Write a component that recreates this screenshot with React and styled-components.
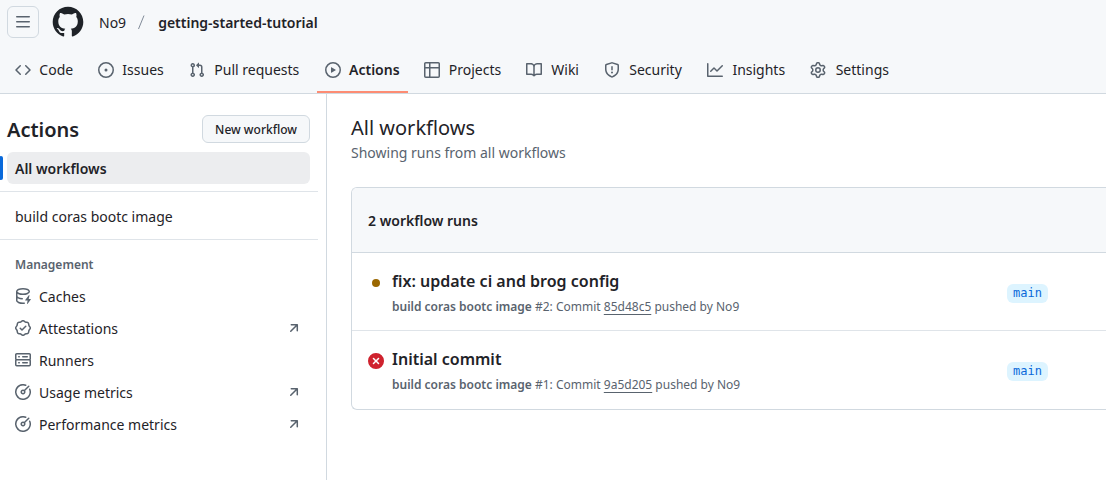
import React from "react";
import styled, { createGlobalStyle, css } from "styled-components";

const color = {
  text: "#1f2328",
  muted: "#59636e",
  border: "#d1d9e0",
  softBorder: "#dfe4e9",
  subtle: "#f6f8fa",
  accent: "#0969da",
  accentBg: "#ddf4ff",
  orange: "#fd8c73",
  amber: "#9a6700",
  red: "#cf222e",
};

const GlobalStyle = createGlobalStyle`
  *, *::before, *::after { box-sizing: border-box; }
  body {
    margin: 0;
    background: #ffffff;
    color: ${color.text};
    font-family: "Noto Sans", "Liberation Sans", sans-serif;
    font-size: 14px;
    line-height: 21px;
    overflow-x: hidden;
  }
  h1, h2, h3, p, ul, ol { margin: 0; padding: 0; }
  ul, ol { list-style: none; }
  a { color: inherit; text-decoration: none; }
  button { font: inherit; color: inherit; cursor: pointer; }
`;

const paths = {
  menu: "M1 2.75A.75.75 0 0 1 1.75 2h12.5a.75.75 0 0 1 0 1.5H1.75A.75.75 0 0 1 1 2.75Zm0 5A.75.75 0 0 1 1.75 7h12.5a.75.75 0 0 1 0 1.5H1.75A.75.75 0 0 1 1 7.75ZM1.75 12h12.5a.75.75 0 0 1 0 1.5H1.75a.75.75 0 0 1 0-1.5Z",
  code: "m11.28 3.22 4.25 4.25a.75.75 0 0 1 0 1.06l-4.25 4.25a.749.749 0 0 1-1.275-.326.749.749 0 0 1 .215-.734L13.94 8l-3.72-3.72a.749.749 0 0 1 .326-1.275.749.749 0 0 1 .734.215Zm-6.56 0a.751.751 0 0 1 1.042.018.751.751 0 0 1 .018 1.042L2.06 8l3.72 3.72a.749.749 0 0 1-.326 1.275.749.749 0 0 1-.734-.215L.47 8.53a.75.75 0 0 1 0-1.06Z",
  issue: "M8 9.5a1.5 1.5 0 1 0 0-3 1.5 1.5 0 0 0 0 3Z M8 0a8 8 0 1 1 0 16A8 8 0 0 1 8 0ZM1.5 8a6.5 6.5 0 1 0 13 0 6.5 6.5 0 0 0-13 0Z",
  pull: "M1.5 3.25a2.25 2.25 0 1 1 3 2.122v5.256a2.251 2.251 0 1 1-1.5 0V5.372A2.25 2.25 0 0 1 1.5 3.25Zm5.677-.177L9.573.677A.25.25 0 0 1 10 .854V2.5h1A2.5 2.5 0 0 1 13.5 5v5.628a2.251 2.251 0 1 1-1.5 0V5a1 1 0 0 0-1-1h-1v1.646a.25.25 0 0 1-.427.177L7.177 3.427a.25.25 0 0 1 0-.354ZM3.75 2.5a.75.75 0 1 0 0 1.5.75.75 0 0 0 0-1.5Zm0 9.5a.75.75 0 1 0 0 1.5.75.75 0 0 0 0-1.5Zm8.25.75a.75.75 0 1 0 1.5 0 .75.75 0 0 0-1.5 0Z",
  play: "M8 0a8 8 0 1 1 0 16A8 8 0 0 1 8 0ZM1.5 8a6.5 6.5 0 1 0 13 0 6.5 6.5 0 0 0-13 0Zm4.879-2.773 4.264 2.559a.25.25 0 0 1 0 .428l-4.264 2.559A.25.25 0 0 1 6 10.559V5.442a.25.25 0 0 1 .379-.215Z",
  table: "M0 1.75C0 .784.784 0 1.75 0h12.5C15.216 0 16 .784 16 1.75v12.5A1.75 1.75 0 0 1 14.25 16H1.75A1.75 1.75 0 0 1 0 14.25ZM6.5 6.5v8h7.75a.25.25 0 0 0 .25-.25V6.5Zm8-1.5V1.75a.25.25 0 0 0-.25-.25H6.5V5Zm-13 1.5v7.75c0 .138.112.25.25.25H5v-8ZM5 5V1.5H1.75a.25.25 0 0 0-.25.25V5Z",
  book: "M0 1.75A.75.75 0 0 1 .75 1h4.253c1.227 0 2.317.59 3 1.501A3.743 3.743 0 0 1 11.006 1h4.245a.75.75 0 0 1 .75.75v10.5a.75.75 0 0 1-.75.75h-4.507a2.25 2.25 0 0 0-1.591.659l-.622.621a.75.75 0 0 1-1.06 0l-.622-.621A2.25 2.25 0 0 0 5.258 13H.75a.75.75 0 0 1-.75-.75Zm7.251 10.324.004-5.073-.002-2.253A2.25 2.25 0 0 0 5.003 2.5H1.5v9h3.757a3.75 3.75 0 0 1 1.994.574ZM8.755 4.75l-.004 7.322a3.752 3.752 0 0 1 1.992-.572H14.5v-9h-3.495a2.25 2.25 0 0 0-2.25 2.25Z",
  shield: "M7.467.133a1.748 1.748 0 0 1 1.066 0l5.25 1.68A1.75 1.75 0 0 1 15 3.48V7c0 1.566-.32 3.182-1.303 4.682-.983 1.498-2.585 2.813-5.032 3.855a1.697 1.697 0 0 1-1.33 0c-2.447-1.042-4.049-2.357-5.032-3.855C1.32 10.182 1 8.566 1 7V3.48a1.75 1.75 0 0 1 1.217-1.667Zm.61 1.429a.25.25 0 0 0-.153 0l-5.25 1.68a.25.25 0 0 0-.174.238V7c0 1.358.275 2.666 1.057 3.86.784 1.194 2.121 2.34 4.366 3.297a.196.196 0 0 0 .154 0c2.245-.956 3.582-2.104 4.366-3.298C13.225 9.666 13.5 8.36 13.5 7V3.48a.251.251 0 0 0-.174-.237l-5.25-1.68ZM8.75 4.75v3a.75.75 0 0 1-1.5 0v-3a.75.75 0 0 1 1.5 0ZM9 10.5a1 1 0 1 1-2 0 1 1 0 0 1 2 0Z",
  graph: "M1.5 1.75V13.5h13.75a.75.75 0 0 1 0 1.5H.75a.75.75 0 0 1-.75-.75V1.75a.75.75 0 0 1 1.5 0Zm14.28 2.53-5.25 5.25a.75.75 0 0 1-1.06 0L7 7.06 4.28 9.78a.751.751 0 0 1-1.042-.018.751.751 0 0 1-.018-1.042l3.25-3.25a.75.75 0 0 1 1.06 0L10 7.94l4.72-4.72a.751.751 0 0 1 1.042.018.751.751 0 0 1 .018 1.042Z",
  gear: "M8 0a8.2 8.2 0 0 1 .701.031C9.444.095 9.99.645 10.16 1.29l.288 1.107c.018.066.079.158.212.224.231.114.454.243.668.386.123.082.233.09.299.071l1.103-.303c.644-.176 1.392.021 1.82.63.27.385.506.792.704 1.218.315.675.111 1.422-.364 1.891l-.814.806c-.049.048-.098.147-.088.294.016.257.016.515 0 .772-.01.147.038.246.088.294l.814.806c.475.469.679 1.216.364 1.891a7.977 7.977 0 0 1-.704 1.217c-.428.61-1.176.807-1.82.63l-1.102-.302c-.067-.019-.177-.011-.3.071a5.909 5.909 0 0 1-.668.386c-.133.066-.194.158-.211.224l-.29 1.106c-.168.646-.715 1.196-1.458 1.26a8.006 8.006 0 0 1-1.402 0c-.743-.064-1.289-.614-1.458-1.26l-.289-1.106c-.018-.066-.079-.158-.212-.224a5.738 5.738 0 0 1-.668-.386c-.123-.082-.233-.09-.299-.071l-1.103.303c-.644.176-1.392-.021-1.82-.63a8.12 8.12 0 0 1-.704-1.218c-.315-.675-.111-1.422.363-1.891l.815-.806c.05-.048.098-.147.088-.294a6.214 6.214 0 0 1 0-.772c.01-.147-.038-.246-.088-.294l-.815-.806C.635 6.045.431 5.298.746 4.623a7.92 7.92 0 0 1 .704-1.217c.428-.61 1.176-.807 1.82-.63l1.102.302c.067.019.177.011.3-.071.214-.143.437-.272.668-.386.133-.066.194-.158.211-.224l.29-1.106C6.009.645 6.556.095 7.299.03 7.53.01 7.764 0 8 0Zm-.571 1.525c-.036.003-.108.036-.137.146l-.289 1.105c-.147.561-.549.967-.998 1.189-.173.086-.34.183-.5.29-.417.278-.97.423-1.529.27l-1.103-.303c-.109-.03-.175.016-.195.045-.22.312-.412.644-.573.99-.014.031-.021.11.059.19l.815.806c.411.406.562.957.53 1.456a4.709 4.709 0 0 0 0 .582c.032.499-.119 1.05-.53 1.456l-.815.806c-.081.08-.073.159-.059.19.162.346.353.677.573.989.02.03.085.076.195.046l1.102-.303c.56-.153 1.113-.008 1.53.27.161.107.328.204.501.29.447.222.85.629.997 1.189l.289 1.105c.029.109.101.143.137.146a6.6 6.6 0 0 0 1.142 0c.036-.003.108-.036.137-.146l.289-1.105c.147-.561.549-.967.998-1.189.173-.086.34-.183.5-.29.417-.278.97-.423 1.529-.27l1.103.303c.109.029.175-.016.195-.045.22-.313.411-.644.573-.99.014-.031.021-.11-.059-.19l-.815-.806c-.411-.406-.562-.957-.53-1.456a4.709 4.709 0 0 0 0-.582c-.032-.499.119-1.05.53-1.456l.815-.806c.081-.08.073-.159.059-.19a6.464 6.464 0 0 0-.573-.989c-.02-.03-.085-.076-.195-.046l-1.102.303c-.56.153-1.113.008-1.53-.27a4.44 4.44 0 0 0-.501-.29c-.447-.222-.85-.629-.997-1.189l-.289-1.105c-.029-.11-.101-.143-.137-.146a6.6 6.6 0 0 0-1.142 0ZM11 8a3 3 0 1 1-6 0 3 3 0 0 1 6 0ZM9.5 8a1.5 1.5 0 1 0-3.001.001A1.5 1.5 0 0 0 9.5 8Z",
  cache: "M2.5 5.724V8c0 .248.238.7 1.169 1.159.874.43 2.144.745 3.62.822a.75.75 0 1 1-.078 1.498c-1.622-.085-3.102-.432-4.204-.975a5.565 5.565 0 0 1-.507-.28V12.5c0 .133.058.318.282.551.227.237.591.483 1.101.707 1.015.447 2.47.742 4.117.742.406 0 .802-.018 1.183-.052a.751.751 0 1 1 .134 1.494C8.89 15.98 8.45 16 8 16c-1.805 0-3.475-.32-4.721-.869-.623-.274-1.173-.619-1.579-1.041-.408-.425-.7-.964-.7-1.59v-9c0-.626.292-1.165.7-1.591.406-.42.956-.766 1.579-1.04C4.525.32 6.195 0 8 0c1.806 0 3.476.32 4.721.869.623.274 1.173.619 1.579 1.041.408.425.7.964.7 1.59 0 .626-.292 1.165-.7 1.591-.406.42-.956.766-1.578 1.04C11.475 6.68 9.805 7 8 7c-1.805 0-3.475-.32-4.721-.869a6.15 6.15 0 0 1-.779-.407Zm0-2.224c0 .133.058.318.282.551.227.237.591.483 1.101.707C4.898 5.205 6.353 5.5 8 5.5c1.646 0 3.101-.295 4.118-.742.508-.224.873-.471 1.1-.708.224-.232.282-.417.282-.55 0-.133-.058-.318-.282-.551-.227-.237-.591-.483-1.101-.707C11.102 1.795 9.647 1.5 8 1.5c-1.646 0-3.101.295-4.118.742-.508.224-.873.471-1.1.708-.224.232-.282.417-.282.55Z M14.49 7.582a.375.375 0 0 0-.66-.313l-3.625 4.625a.375.375 0 0 0 .295.606h2.127l-.619 2.922a.375.375 0 0 0 .666.304l3.125-4.125A.375.375 0 0 0 15.5 11h-1.778l.769-3.418Z",
  verified: "m9.585.52.929.68c.153.112.331.186.518.215l1.138.175a2.678 2.678 0 0 1 2.24 2.24l.174 1.139c.029.187.103.365.215.518l.68.928a2.677 2.677 0 0 1 0 3.17l-.68.928a1.174 1.174 0 0 0-.215.518l-.175 1.138a2.678 2.678 0 0 1-2.241 2.241l-1.138.175a1.17 1.17 0 0 0-.518.215l-.928.68a2.677 2.677 0 0 1-3.17 0l-.928-.68a1.174 1.174 0 0 0-.518-.215L3.83 14.41a2.678 2.678 0 0 1-2.24-2.24l-.175-1.138a1.17 1.17 0 0 0-.215-.518l-.68-.928a2.677 2.677 0 0 1 0-3.17l.68-.928c.112-.153.186-.331.215-.518l.175-1.14a2.678 2.678 0 0 1 2.24-2.24l1.139-.175c.187-.029.365-.103.518-.215l.928-.68a2.677 2.677 0 0 1 3.17 0ZM7.303 1.728l-.927.68a2.67 2.67 0 0 1-1.18.489l-1.137.174a1.179 1.179 0 0 0-.987.987l-.174 1.136a2.677 2.677 0 0 1-.489 1.18l-.68.928a1.18 1.18 0 0 0 0 1.394l.68.927c.256.348.424.753.489 1.18l.174 1.137c.078.509.478.909.987.987l1.136.174a2.67 2.67 0 0 1 1.18.489l.928.68c.414.305.979.305 1.394 0l.927-.68a2.67 2.67 0 0 1 1.18-.489l1.137-.174a1.18 1.18 0 0 0 .987-.987l.174-1.136a2.67 2.67 0 0 1 .489-1.18l.68-.928a1.176 1.176 0 0 0 0-1.394l-.68-.927a2.686 2.686 0 0 1-.489-1.18l-.174-1.137a1.179 1.179 0 0 0-.987-.987l-1.136-.174a2.677 2.677 0 0 1-1.18-.489l-.928-.68a1.176 1.176 0 0 0-1.394 0ZM11.28 6.78l-3.75 3.75a.75.75 0 0 1-1.06 0L4.72 8.78a.751.751 0 0 1 .018-1.042.751.751 0 0 1 1.042-.018L7 8.94l3.22-3.22a.751.751 0 0 1 1.042.018.751.751 0 0 1 .018 1.042Z",
  server: "M1.75 1h12.5c.966 0 1.75.784 1.75 1.75v4c0 .372-.116.717-.314 1 .198.283.314.628.314 1v4a1.75 1.75 0 0 1-1.75 1.75H1.75A1.75 1.75 0 0 1 0 12.75v-4c0-.358.109-.707.314-1a1.739 1.739 0 0 1-.314-1v-4C0 1.784.784 1 1.75 1ZM1.5 2.75v4c0 .138.112.25.25.25h12.5a.25.25 0 0 0 .25-.25v-4a.25.25 0 0 0-.25-.25H1.75a.25.25 0 0 0-.25.25Zm.25 5.75a.25.25 0 0 0-.25.25v4c0 .138.112.25.25.25h12.5a.25.25 0 0 0 .25-.25v-4a.25.25 0 0 0-.25-.25ZM7 4.75A.75.75 0 0 1 7.75 4h4.5a.75.75 0 0 1 0 1.5h-4.5A.75.75 0 0 1 7 4.75ZM7.75 10h4.5a.75.75 0 0 1 0 1.5h-4.5a.75.75 0 0 1 0-1.5ZM3 4.75A.75.75 0 0 1 3.75 4h.5a.75.75 0 0 1 0 1.5h-.5A.75.75 0 0 1 3 4.75ZM3.75 10h.5a.75.75 0 0 1 0 1.5h-.5a.75.75 0 0 1 0-1.5Z",
  meter: "M8 1.5a6.5 6.5 0 1 0 6.016 4.035.75.75 0 0 1 1.388-.57 8 8 0 1 1-4.37-4.37.75.75 0 0 1-.569 1.389A6.473 6.473 0 0 0 8 1.5Zm6.28.22a.75.75 0 0 1 0 1.06l-4.063 4.064a2.5 2.5 0 1 1-1.06-1.06L13.22 1.72a.75.75 0 0 1 1.06 0ZM7 8a1 1 0 1 0 2 0 1 1 0 0 0-2 0Z",
  arrow: "M4.53 4.75A.75.75 0 0 1 5.28 4h6.01a.75.75 0 0 1 .75.75v6.01a.75.75 0 0 1-1.5 0v-4.2l-5.26 5.261a.749.749 0 0 1-1.275-.326.749.749 0 0 1 .215-.734L9.48 5.5h-4.2a.75.75 0 0 1-.75-.75Z",
  dot: "M8 4a4 4 0 1 1 0 8 4 4 0 0 1 0-8Z",
  failed: "M2.343 13.657A8 8 0 1 1 13.658 2.343 8 8 0 0 1 2.343 13.657ZM6.03 4.97a.751.751 0 0 0-1.042.018.751.751 0 0 0-.018 1.042L6.94 8 4.97 9.97a.749.749 0 0 0 .326 1.275.749.749 0 0 0 .734-.215L8 9.06l1.97 1.97a.749.749 0 0 0 1.275-.326.749.749 0 0 0-.215-.734L9.06 8l1.97-1.97a.749.749 0 0 0-.326-1.275.749.749 0 0 0-.734.215L8 6.94Z",
};

const IconSvg = styled.svg`
  display: block;
  flex: none;
  width: 16px;
  height: 16px;
  fill: ${(p) => p.$tone || color.muted};
`;

function Icon({ name, tone, className }) {
  return (
    <IconSvg className={className} viewBox="0 0 16 16" $tone={tone} aria-hidden="true">
      <path d={paths[name]} />
    </IconSvg>
  );
}

const Header = styled.header`
  background: ${color.subtle};
  border-bottom: 1px solid ${color.border};
`;

const TopRow = styled.div`
  display: flex;
  align-items: center;
  padding: 6px 7px;
`;

const MenuButton = styled.button`
  display: grid;
  place-items: center;
  width: 32px;
  height: 32px;
  padding: 0;
  background: transparent;
  border: 1px solid ${color.border};
  border-radius: 6px;
`;

const HomeLink = styled.a`
  margin-left: 13px;
`;

const Logo = styled.svg`
  display: block;
  width: 32px;
  height: 32px;
  fill: ${color.text};
`;

const Breadcrumb = styled.ol`
  display: flex;
  align-items: center;
  margin-left: 15px;
`;

const Crumb = styled.li`
  display: flex;
  align-items: center;
  font-weight: ${(p) => (p.$current ? 600 : 400)};
`;

const Slash = styled.svg`
  display: block;
  width: 32px;
  height: 16px;
  stroke: #818b98;
`;

const Tabs = styled.nav`
  display: flex;
  gap: 8px;
  padding: 0 7px;
`;

const Tab = styled.a`
  display: flex;
  align-items: center;
  gap: 8px;
  height: 49px;
  padding: 4px 8px 0;
  white-space: nowrap;
  border-bottom: 2px solid transparent;
  ${(p) =>
    p.$active &&
    css`
      font-weight: 600;
      border-bottom-color: ${color.orange};
    `}
`;

/* Reserves the width of the bold label so tabs keep their place when selected. */
const TabLabel = styled.span`
  text-align: center;
  &::after {
    content: attr(data-label);
    display: block;
    height: 0;
    overflow: hidden;
    visibility: hidden;
    font-weight: 600;
  }
`;

const Layout = styled.div`
  display: flex;
  min-height: calc(100vh - 94px);
`;

const Sidebar = styled.aside`
  flex: none;
  width: 327px;
  padding: 20px 8px 16px 0;
  border-right: 1px solid ${color.border};
`;

const SidebarHead = styled.div`
  display: flex;
  align-items: flex-start;
  justify-content: space-between;
  padding: 0 8px 6px 7px;
`;

const SidebarTitle = styled.h2`
  font-size: 20px;
  line-height: 32px;
  font-weight: 600;
`;

const SmallButton = styled.button`
  height: 28px;
  margin-top: 1px;
  padding: 0 12px;
  font-size: 12px;
  line-height: 21px;
  font-weight: 500;
  background: ${color.subtle};
  border: 1px solid ${color.border};
  border-radius: 6px;
`;

const NavList = styled.ul`
  padding: 0 8px 0 7px;
`;

const NavLink = styled.a`
  position: relative;
  display: flex;
  align-items: center;
  gap: 8px;
  height: 32px;
  padding: 0 8px;
  border-radius: 6px;
  ${(p) =>
    p.$active &&
    css`
      font-weight: 600;
      background: #ecedef;
      &::before {
        content: "";
        position: absolute;
        top: 4px;
        bottom: 4px;
        left: -8px;
        width: 4px;
        border-radius: 6px;
        background: ${color.accent};
      }
    `}
`;

const NavLabel = styled.span`
  flex: 1;
`;

const Divider = styled.hr`
  height: 1px;
  margin: 7px 0 8px;
  border: 0;
  background: ${color.softBorder};
`;

const GroupTitle = styled.h3`
  padding: 8px 15px 6px;
  font-size: 12px;
  line-height: 18px;
  font-weight: 600;
  color: ${color.muted};
`;

const Main = styled.main`
  flex: 1;
  min-width: 0;
  padding: 19px 0 24px 24px;
`;

const PageTitle = styled.h1`
  font-size: 20px;
  line-height: 30px;
  font-weight: 400;
`;

const PageNote = styled.p`
  margin-bottom: 24px;
  line-height: 20px;
  color: ${color.muted};
`;

const Card = styled.section`
  border: 1px solid ${color.border};
  border-right: 0;
  border-radius: 6px 0 0 6px;
  overflow: hidden;
`;

const CardHead = styled.header`
  padding: 22px 16px 21px;
  font-weight: 600;
  background: ${color.subtle};
  border-bottom: 1px solid ${color.border};
`;

const RunRow = styled.li`
  display: flex;
  align-items: center;
  gap: 8px;
  padding: 16px 58px 13px 16px;
  border-bottom: 1px solid ${color.softBorder};
  &:last-child {
    border-bottom-color: transparent;
  }
`;

const StatusIcon = styled(Icon)`
  align-self: flex-start;
  margin-top: 6px;
`;

const RunBody = styled.div`
  flex: 1;
  min-width: 0;
`;

const RunTitle = styled.a`
  display: block;
  margin-bottom: 4px;
  font-size: 16px;
  line-height: 24px;
  font-weight: 600;
`;

const RunMeta = styled.p`
  font-size: 12px;
  line-height: 20px;
  color: ${color.muted};
`;

const WorkflowName = styled.strong`
  font-weight: 600;
`;

const CommitLink = styled.a`
  text-decoration: underline;
  text-underline-offset: 3px;
`;

const Branch = styled.a`
  padding: 0 6px;
  font-family: "DejaVu Sans Mono", "Liberation Mono", monospace;
  font-size: 12px;
  line-height: 19px;
  color: ${color.accent};
  background: ${color.accentBg};
  border-radius: 6px;
`;

const tabs = [
  ["code", "Code"],
  ["issue", "Issues"],
  ["pull", "Pull requests"],
  ["play", "Actions"],
  ["table", "Projects"],
  ["book", "Wiki"],
  ["shield", "Security"],
  ["graph", "Insights"],
  ["gear", "Settings"],
];

const management = [
  { icon: "cache", label: "Caches" },
  { icon: "verified", label: "Attestations", external: true },
  { icon: "server", label: "Runners" },
  { icon: "meter", label: "Usage metrics", external: true },
  { icon: "meter", label: "Performance metrics", external: true },
];

const runs = [
  { number: 2, title: "fix: update ci and brog config", commit: "85d48c5", icon: "dot", tone: color.amber },
  { number: 1, title: "Initial commit", commit: "9a5d205", icon: "failed", tone: color.red },
];

export default function App() {
  return (
    <>
      <GlobalStyle />
      <Header>
        <TopRow>
          <MenuButton type="button" aria-label="Open menu">
            <Icon name="menu" />
          </MenuButton>
          <HomeLink href="#" aria-label="Homepage">
            <Logo viewBox="0.5 0.5 23 23" aria-hidden="true">
              <path d="M12 1C5.923 1 1 5.923 1 12c0 4.867 3.149 8.979 7.521 10.436.55.096.756-.233.756-.522 0-.262-.013-1.128-.013-2.049-2.764.509-3.479-.674-3.699-1.292-.124-.317-.66-1.293-1.127-1.554-.385-.207-.936-.715-.014-.729.866-.014 1.485.797 1.691 1.128.99 1.663 2.571 1.196 3.204.907.096-.715.385-1.196.701-1.471-2.448-.275-5.005-1.224-5.005-5.432 0-1.196.426-2.186 1.128-2.956-.111-.275-.496-1.402.11-2.915 0 0 .921-.288 3.024 1.128a10.193 10.193 0 0 1 2.75-.371c.936 0 1.871.123 2.75.371 2.104-1.43 3.025-1.128 3.025-1.128.605 1.513.221 2.64.111 2.915.701.77 1.127 1.747 1.127 2.956 0 4.222-2.571 5.157-5.019 5.432.399.344.743 1.004.743 2.035 0 1.471-.014 2.654-.014 3.025 0 .289.206.632.756.522C19.851 20.979 23 16.854 23 12c0-6.077-4.922-11-11-11Z" />
            </Logo>
          </HomeLink>
          <Breadcrumb>
            <Crumb>
              <a href="#">No9</a>
              <Slash viewBox="0 0 32 16" aria-hidden="true">
                <path d="M18 1.5 12.5 15" />
              </Slash>
            </Crumb>
            <Crumb $current>
              <a href="#">getting-started-tutorial</a>
            </Crumb>
          </Breadcrumb>
        </TopRow>
        <Tabs aria-label="Repository">
          {tabs.map(([icon, label]) => (
            <Tab key={label} href="#" $active={label === "Actions"}>
              <Icon name={icon} />
              <TabLabel data-label={label}>{label}</TabLabel>
            </Tab>
          ))}
        </Tabs>
      </Header>
      <Layout>
        <Sidebar>
          <SidebarHead>
            <SidebarTitle>Actions</SidebarTitle>
            <SmallButton type="button">New workflow</SmallButton>
          </SidebarHead>
          <NavList>
            <li>
              <NavLink href="#" $active>
                <NavLabel>All workflows</NavLabel>
              </NavLink>
            </li>
          </NavList>
          <Divider />
          <NavList>
            <li>
              <NavLink href="#">
                <NavLabel>build coras bootc image</NavLabel>
              </NavLink>
            </li>
          </NavList>
          <Divider />
          <GroupTitle>Management</GroupTitle>
          <NavList>
            {management.map((item) => (
              <li key={item.label}>
                <NavLink href="#">
                  <Icon name={item.icon} />
                  <NavLabel>{item.label}</NavLabel>
                  {item.external && <Icon name="arrow" />}
                </NavLink>
              </li>
            ))}
          </NavList>
        </Sidebar>
        <Main>
          <PageTitle>All workflows</PageTitle>
          <PageNote>Showing runs from all workflows</PageNote>
          <Card>
            <CardHead>2 workflow runs</CardHead>
            <ul>
              {runs.map((run) => (
                <RunRow key={run.number}>
                  <StatusIcon name={run.icon} tone={run.tone} />
                  <RunBody>
                    <RunTitle href="#">{run.title}</RunTitle>
                    <RunMeta>
                      <WorkflowName>build coras bootc image</WorkflowName> #{run.number}: Commit{" "}
                      <CommitLink href="#">{run.commit}</CommitLink> pushed by <a href="#">No9</a>
                    </RunMeta>
                  </RunBody>
                  <Branch href="#">main</Branch>
                </RunRow>
              ))}
            </ul>
          </Card>
        </Main>
      </Layout>
    </>
  );
}
